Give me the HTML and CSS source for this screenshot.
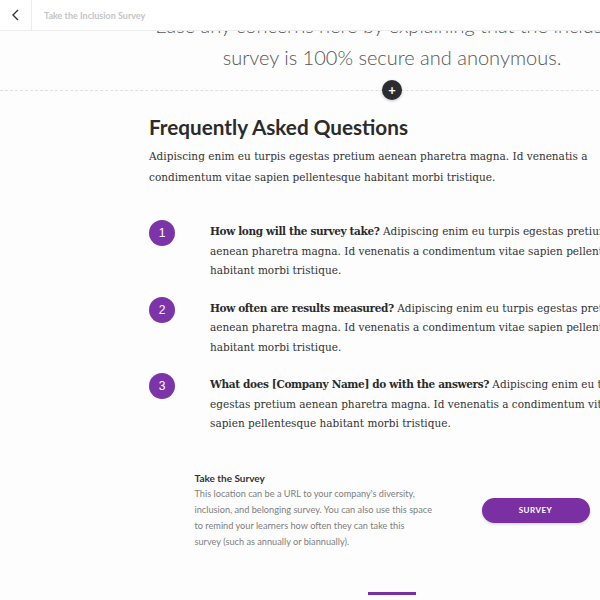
FILE: index.html
```html
<!DOCTYPE html>
<html lang="en">
<head>
    <meta charset="UTF-8">
    <meta name="viewport" content="width=device-width, initial-scale=1.0">
    <title>Take the Inclusion Survey</title>
    <link rel="stylesheet" href="styles.css">
</head>
<body>
    <!-- Sticky lesson header -->
    <header class="topbar">
        <a class="back-btn" href="#" aria-label="Back">
            <svg width="10" height="12" viewBox="0 0 10 12"><path d="M7 1 L2 6 L7 11" fill="none" stroke="#333" stroke-width="1.4"/></svg>
        </a>
        <span class="topbar-title">Take the Inclusion Survey</span>
    </header>

    <div class="page">
        <p class="intro">Ease any concerns here by explaining that the inclusion survey is 100% secure and anonymous.</p>

        <!-- Block divider with insert button -->
        <div class="divider">
            <span class="add-btn">+</span>
        </div>

        <section class="faq">
            <h2>Frequently Asked Questions</h2>
            <p class="lead">Adipiscing enim eu turpis egestas pretium aenean pharetra magna. Id venenatis a condimentum vitae sapien pellentesque habitant morbi tristique.</p>

            <ol class="faq-list">
                <li class="faq-item">
                    <span class="num">1</span>
                    <p><strong>How long will the survey take?</strong> Adipiscing enim eu turpis egestas pretium aenean pharetra magna. Id venenatis a condimentum vitae sapien pellentesque habitant morbi tristique.</p>
                </li>
                <li class="faq-item">
                    <span class="num">2</span>
                    <p><strong>How often are results measured?</strong> Adipiscing enim eu turpis egestas pretium aenean pharetra magna. Id venenatis a condimentum vitae sapien pellentesque habitant morbi tristique.</p>
                </li>
                <li class="faq-item">
                    <span class="num">3</span>
                    <p><strong>What does [Company Name] do with the answers?</strong> Adipiscing enim eu turpis egestas pretium aenean pharetra magna. Id venenatis a condimentum vitae sapien pellentesque habitant morbi tristique.</p>
                </li>
            </ol>
        </section>

        <!-- Call to action -->
        <section class="cta">
            <div class="cta-text">
                <h3>Take the Survey</h3>
                <p>This location can be a URL to your company's diversity, inclusion, and belonging survey. You can also use this space to remind your learners how often they can take this survey (such as annually or biannually).</p>
            </div>
            <a class="survey-btn" href="#">Survey</a>
        </section>

        <div class="end-bar"></div>
    </div>
</body>
</html>
```

FILE: styles.css
```css
body {
    margin: 0;
    width: 600px;
    height: 600px;
    overflow: hidden;
    background-color: #fdfdfe;
    font-family: 'Lato', sans-serif;
    color: #333;
}

.topbar {
    position: fixed;
    top: 0;
    left: 0;
    right: 0;
    height: 30px;
    display: flex;
    align-items: center;
    background-color: #fff;
    border-bottom: 1px solid #ececec;
    z-index: 2;
}

.back-btn {
    width: 31px;
    height: 30px;
    display: flex;
    align-items: center;
    justify-content: center;
    border-right: 1px solid #ececec;
}

.topbar-title {
    margin-left: 12px;
    font-size: 9px;
    font-weight: 700;
    color: #c4c4c4;
}

.page {
    width: 784px;
}

.intro {
    margin: 9px auto 0;
    width: 500px;
    text-align: center;
    font-size: 20px;
    font-weight: 300;
    line-height: 32px;
    color: #555;
}

.divider {
    position: relative;
    margin-top: 17px;
    border-top: 1px dashed #e0e0e0;
}

.add-btn {
    position: absolute;
    left: 382px;
    top: -11px;
    width: 20px;
    height: 20px;
    border-radius: 50%;
    background-color: #2b2b30;
    color: #fff;
    font-size: 13px;
    font-weight: 700;
    line-height: 20px;
    text-align: center;
    box-shadow: 0 1px 3px rgba(0, 0, 0, 0.25);
}

.faq {
    width: 486px;
    margin: 0 auto;
    padding-top: 23px;
}

.faq h2 {
    margin: 0;
    font-size: 20.7px;
    font-weight: 700;
    line-height: 26px;
    color: #2b2b2b;
}

.lead {
    margin: 6px 0 0;
    font-family: 'DejaVu Serif', serif;
    font-size: 10.5px;
    line-height: 21px;
    color: #333;
}

.faq-list {
    list-style: none;
    margin: 34px 0 0;
    padding: 0;
    display: flex;
    flex-direction: column;
    gap: 18px;
}

.faq-item {
    display: grid;
    grid-template-columns: 26px 1fr;
    column-gap: 35px;
}

.num {
    width: 26px;
    height: 26px;
    margin-top: -2px;
    border-radius: 50%;
    background-color: #7b35a8;
    color: #fff;
    font-family: 'Liberation Sans', sans-serif;
    font-size: 12px;
    line-height: 26px;
    text-align: center;
}

.faq-item p {
    margin: 0;
    font-family: 'DejaVu Serif', serif;
    font-size: 10.5px;
    line-height: 19.5px;
    color: #333;
}

.faq-item strong {
    color: #2b2b2b;
    letter-spacing: -0.35px;
}

.cta {
    width: 395px;
    margin: 36px auto 0;
    display: flex;
    align-items: center;
    justify-content: space-between;
}

.cta-text {
    width: 238px;
}

.cta h3 {
    margin: 0;
    font-size: 10px;
    font-weight: 700;
    line-height: 16px;
    color: #333;
}

.cta-text p {
    margin: 0;
    font-size: 9.2px;
    line-height: 16.3px;
    color: #7d7d7d;
}

.survey-btn {
    width: 108px;
    height: 25px;
    border-radius: 13px;
    background-color: #7a2fa3;
    color: #fff;
    font-size: 8px;
    font-weight: 700;
    letter-spacing: 0.5px;
    text-transform: uppercase;
    text-decoration: none;
    line-height: 25px;
    text-align: center;
    box-shadow: 0 1px 3px rgba(0, 0, 0, 0.2);
}

.end-bar {
    width: 48px;
    height: 3px;
    margin: 41px auto 0;
    background-color: #7a2fa3;
}
```
